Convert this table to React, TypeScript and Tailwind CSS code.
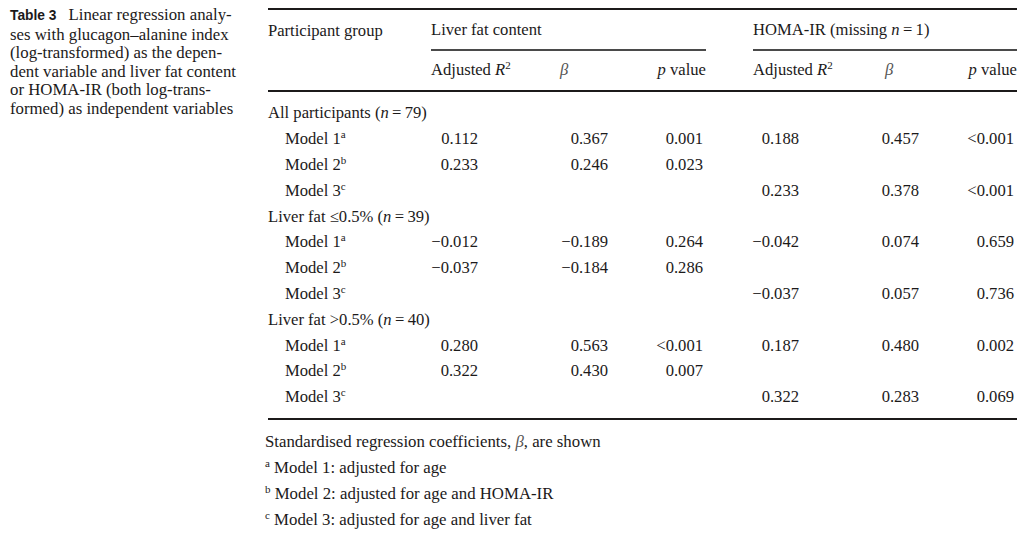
import React from 'react';

type Row = { label: string; sup?: string; vals?: (string | null)[] };

const rows: Row[] = [
  { label: 'All participants', sup: '79' },
  { label: 'Model 1', sup: 'a', vals: ['0.112', '0.367', '0.001', '0.188', '0.457', '<0.001'] },
  { label: 'Model 2', sup: 'b', vals: ['0.233', '0.246', '0.023', null, null, null] },
  { label: 'Model 3', sup: 'c', vals: [null, null, null, '0.233', '0.378', '<0.001'] },
  { label: 'Liver fat \u22640.5%', sup: '39' },
  { label: 'Model 1', sup: 'a', vals: ['\u22120.012', '\u22120.189', '0.264', '\u22120.042', '0.074', '0.659'] },
  { label: 'Model 2', sup: 'b', vals: ['\u22120.037', '\u22120.184', '0.286', null, null, null] },
  { label: 'Model 3', sup: 'c', vals: [null, null, null, '\u22120.037', '0.057', '0.736'] },
  { label: 'Liver fat >0.5%', sup: '40' },
  { label: 'Model 1', sup: 'a', vals: ['0.280', '0.563', '<0.001', '0.187', '0.480', '0.002'] },
  { label: 'Model 2', sup: 'b', vals: ['0.322', '0.430', '0.007', null, null, null] },
  { label: 'Model 3', sup: 'c', vals: [null, null, null, '0.322', '0.283', '0.069'] },
];

// right padding so each column's numbers end where the reference has them
const valuePad = ['pr-[62px]', 'pr-[12px]', 'pr-[3px]', 'pr-[51px]', 'pr-[11px]', 'pr-[3px]'];

const cols = 'grid grid-cols-[163px_109px_80px_86px_144px_80px_87px]';

const Sup = ({ children }: { children: React.ReactNode }) => (
  <sup className="text-[11px] relative -top-[6px] align-baseline">{children}</sup>
);

const AdjR2 = () => (
  <span>
    Adjusted <i>R</i>
    <Sup>2</Sup>
  </span>
);

const PValue = () => (
  <span>
    <i>p</i> value
  </span>
);

export default function App() {
  return (
    <div className="w-[1024px] h-[536px] bg-white text-[#1c1a1a] font-['Liberation_Serif',serif] flex">
      <div className="w-[268px] shrink-0 pl-[10px] pt-[6px] text-[16.8px] leading-[18.6px]">
        <div>
          <span className="font-['Liberation_Sans',sans-serif] font-bold text-[13.8px] mr-[12px]">Table 3</span>
          Linear regression analy-
        </div>
        <div>ses with glucagon–alanine index</div>
        <div>(log-transformed) as the depen-</div>
        <div>dent variable and liver fat content</div>
        <div>or HOMA-IR (both log-trans-</div>
        <div>formed) as independent variables</div>
      </div>

      <div className="w-[749px] pt-[8px] text-[16.6px]">
        <div className="h-[2px] bg-[#1c1a1a]" />
        {/* header row 1 */}
        <div className={`${cols} h-[41px]`}>
          <div className="flex items-center pt-[1px]">Participant group</div>
          <div className="col-span-3 flex items-center pt-[1px] border-b-2 border-[#4a4a4a]">Liver fat content</div>
          <div className="col-span-3 flex items-center pt-[1px] ml-[47px] border-b-2 border-[#4a4a4a]">
            <span>
              HOMA-IR (missing <i>n</i>{'\u2009=\u2009'}1)
            </span>
          </div>
        </div>
        {/* header row 2 */}
        <div className={`${cols} h-[39px] items-center`}>
          <div />
          <div>
            <AdjR2 />
          </div>
          <div className="pl-[20px] text-[#555]">
            <i>β</i>
          </div>
          <div className="text-right">
            <PValue />
          </div>
          <div className="pl-[47px]">
            <AdjR2 />
          </div>
          <div className="pl-[35px] text-[#555]">
            <i>β</i>
          </div>
          <div className="text-right">
            <PValue />
          </div>
        </div>
        <div className="h-[2px] bg-[#1c1a1a]" />

        <div className="pt-[9px] pb-[7px]">
          {rows.map((r, i) =>
            r.vals ? (
              <div key={i} className={`${cols} h-[25.8px] items-center`}>
                <div className="pl-[17px]">
                  {r.label}
                  <Sup>{r.sup}</Sup>
                </div>
                {r.vals.map((v, j) => (
                  <div key={j} className={`text-right ${valuePad[j]}`}>
                    {v}
                  </div>
                ))}
              </div>
            ) : (
              <div key={i} className="h-[25.8px] flex items-center">
                <span>
                  {r.label} (<i>n</i>
                  {'\u2009=\u2009'}
                  {r.sup})
                </span>
              </div>
            )
          )}
        </div>
        <div className="h-[2px] bg-[#1c1a1a]" />

        <div className="-ml-[3px] pt-[9px] leading-[26px] text-[16.8px]">
          <div>
            Standardised regression coefficients, <i className="text-[#555]">β</i>, are shown
          </div>
          <div>
            <Sup>a</Sup> Model 1: adjusted for age
          </div>
          <div>
            <Sup>b</Sup> Model 2: adjusted for age and HOMA-IR
          </div>
          <div>
            <Sup>c</Sup> Model 3: adjusted for age and liver fat
          </div>
        </div>
      </div>
    </div>
  );
}
